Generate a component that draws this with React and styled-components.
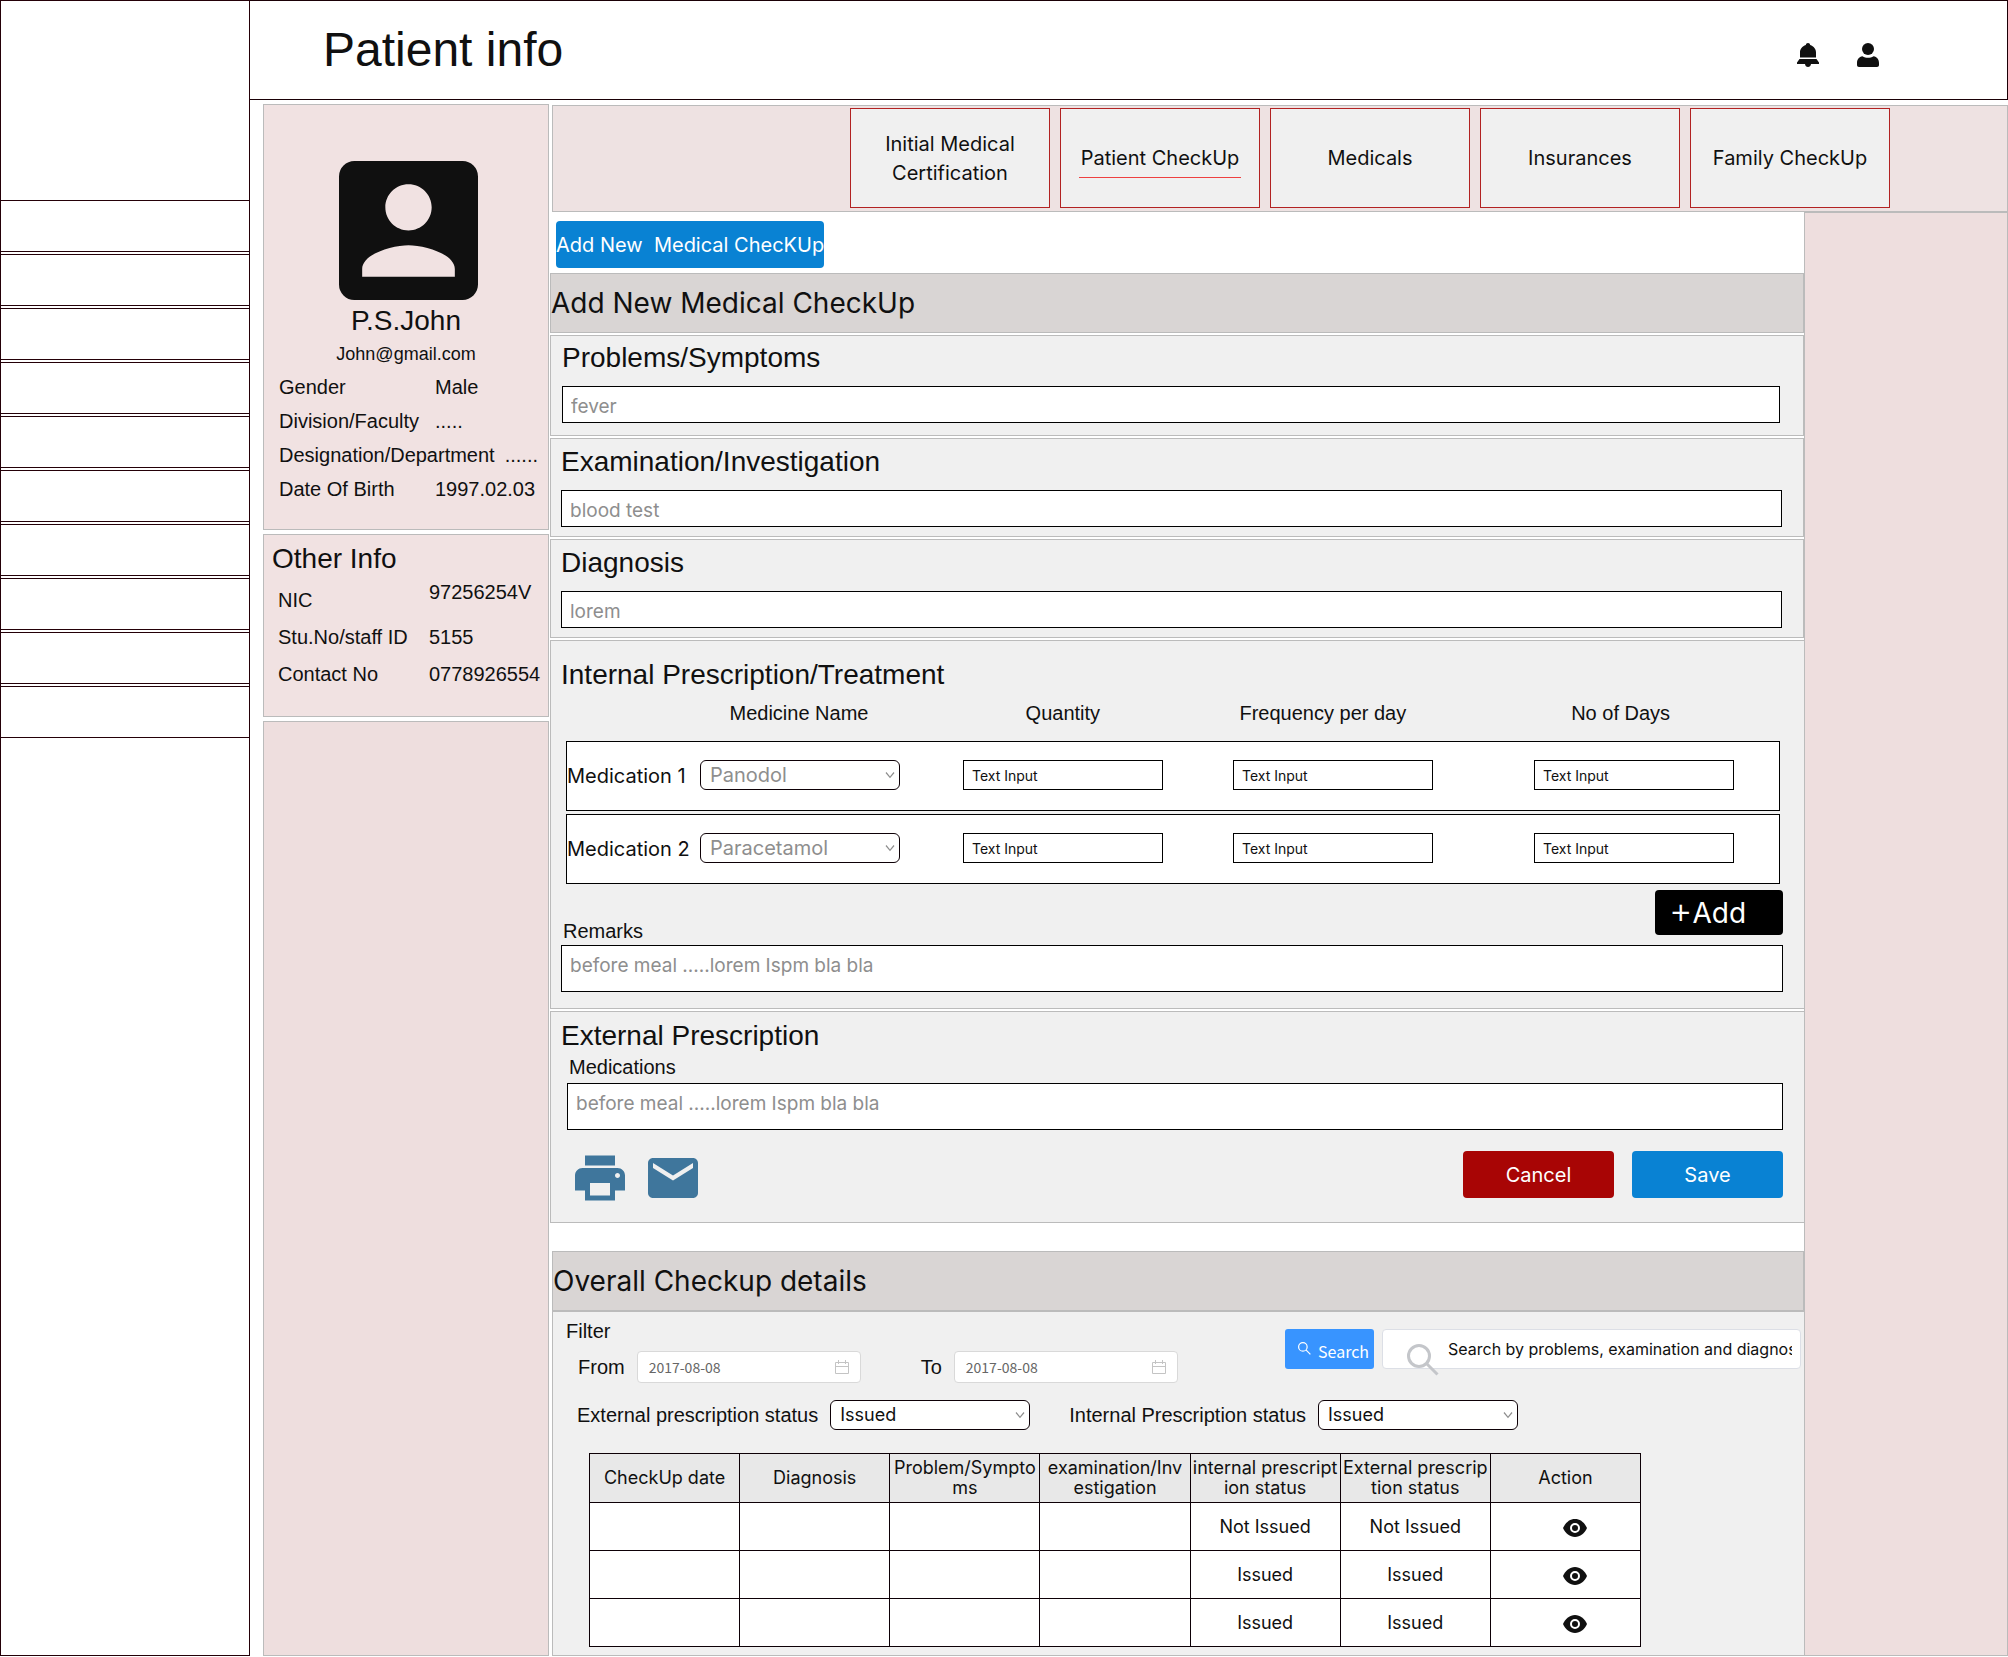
import React from "react";
import styled, { createGlobalStyle } from "styled-components";
import { MdPrint, MdEmail } from "react-icons/md";

const ui = `Inter, "Liberation Sans", sans-serif`;
const arial = `"Liberation Sans", Arial, sans-serif`;
const cjk = `"Noto Sans CJK SC", "Noto Sans", sans-serif`;

const Global = createGlobalStyle`
  *, *::before, *::after { box-sizing: border-box; }
  body { margin: 0; background: #fff; color: #101010; font: 20px/24px ${arial}; }
  h1, h2, h3, p, dl, dd, dt { margin: 0; font-weight: 400; }
  button, input, select, textarea { font: inherit; color: inherit; margin: 0; }
  button { cursor: pointer; border: 0; padding: 0; }
`;

const Page = styled.div`
  display: flex;
  min-height: 100vh;
  padding-bottom: 1px;
`;

const Sidebar = styled.nav`
  flex: 0 0 250px;
  border: 1px solid #240008;
  padding-top: 199px;
  display: flex;
  flex-direction: column;
  gap: 2px;
`;

const NavSlot = styled.a`
  height: 52px;
  border: solid #240008;
  border-width: 1px 0;
`;

const Body = styled.div`
  flex: 1;
  min-width: 0;
  display: flex;
  flex-direction: column;
`;

const Header = styled.header`
  height: 100px;
  border: 1px solid #1a0006;
  border-left: 0;
  display: flex;
  align-items: center;
  justify-content: space-between;
  padding: 0 128px 0 73px;
`;

const Title = styled.h1`
  font-size: 48px;
  line-height: 56px;
`;

const HeaderIcons = styled.div`
  display: flex;
  align-items: center;
  gap: 38px;
  padding-top: 9px;
`;

const IconButton = styled.button`
  display: flex;
  background: none;
  color: ${(p) => p.$color || "#101010"};
`;

const Columns = styled.div`
  flex: 1;
  display: flex;
  gap: 3px;
  padding: 4px 0 0 13px;
`;

const Profile = styled.aside`
  flex: 0 0 286px;
  display: flex;
  flex-direction: column;
  gap: 4px;
`;

const Card = styled.section`
  background: #f1e2e2;
  border: 1px solid #bbb;
`;

const UserCard = styled(Card)`
  height: 426px;
  padding-top: 56px;
`;

const OtherCard = styled(Card)`
  height: 183px;
  padding-top: 8px;
`;

const Filler = styled.div`
  flex: 1;
  background: #eedede;
  border: 1px solid #bbb;
`;

const Avatar = styled.svg`
  display: block;
  width: 139px;
  height: 139px;
  margin-left: 75px;
`;

const UserName = styled.h2`
  font-size: 28px;
  line-height: 42px;
  text-align: center;
`;

const Email = styled.p`
  font-size: 18px;
  line-height: 24px;
  text-align: center;
`;

const Facts = styled.dl`
  display: flex;
  flex-direction: column;
  gap: 10px;
  padding: ${(p) => p.$pad};
`;

const Fact = styled.div`
  display: grid;
  grid-template-columns: minmax(${(p) => p.$label}px, max-content) auto;
  column-gap: 10px;
  justify-content: start;
  line-height: ${(p) => p.$line}px;
  white-space: nowrap;
`;

const SteppedFact = styled(Fact)`
  height: 35px;
  dt { align-self: end; }
  dd { align-self: start; }
`;

const CardTitle = styled.h2`
  font-size: 28px;
  line-height: 32px;
  padding-left: 8px;
`;

const Main = styled.main`
  flex: 1;
  min-width: 0;
  display: flex;
  flex-direction: column;
  padding-top: 1px;
`;

const TabBar = styled.nav`
  height: 107px;
  background: #eee2e2;
  border: 1px solid #bbb;
  display: flex;
  justify-content: flex-end;
  gap: 10px;
  padding: 2px 117px 0 0;
`;

const Tab = styled.a`
  width: 200px;
  height: 100px;
  border: 1px solid #b22222;
  background: #f0f0f0;
  color: inherit;
  text-decoration: none;
  font: 20px/29px ${ui};
  display: flex;
  align-items: center;
  justify-content: center;
  text-align: center;
  padding: 0 16px;
`;

const TabText = styled.span`
  padding: 6px 2px 4px;
  border-bottom: 1px solid ${(p) => (p.$active ? "#ee4040" : "transparent")};
`;

const Content = styled.div`
  flex: 1;
  display: flex;
`;

const Work = styled.div`
  flex: 1;
  min-width: 0;
  display: flex;
  flex-direction: column;
`;

const Aside = styled.div`
  flex: 0 0 204px;
  background: #eedede;
  border: 1px solid #bbb;
`;

const Button = styled.button`
  height: 47px;
  width: ${(p) => p.$width}px;
  border-radius: 4px;
  background: ${(p) => p.$bg || "#0982d3"};
  color: #fff;
  font: 20px/24px ${ui};
  white-space: pre;
`;

const Toolbar = styled.div`
  padding: 9px 4px 5px;
`;

const Banner = styled.h2`
  height: 60px;
  background: #d9d5d4;
  border: 1px solid #bbb;
  font: 28px/58px ${ui};
`;

const Stack = styled.form`
  display: flex;
  flex-direction: column;
  gap: 2px;
  margin-left: -2px;
`;

const Panel = styled.section`
  background: #f0f0f0;
  border: 1px solid #bbb;
  border-right-width: ${(p) => (p.$flush ? 0 : 1)}px;
  padding: ${(p) => p.$pad};
`;

const PanelTitle = styled.h3`
  font-size: 28px;
  line-height: 32px;
`;

const TitleLabel = styled.label`
  display: block;
  font-size: 28px;
  line-height: 32px;
`;

const LongInput = styled.input`
  display: block;
  width: 100%;
  height: 37px;
  margin-top: 12px;
  padding: 3px 8px 0;
  border: 1px solid #000;
  background: #fff;
  font: 19px/24px ${ui};
  &::placeholder { color: #8e8e8e; opacity: 1; }
`;

const LongArea = styled.textarea`
  display: block;
  width: 100%;
  height: 47px;
  padding: 8px;
  border: 1px solid #000;
  border-radius: 0;
  background: #fff;
  resize: none;
  overflow: hidden;
  font: 19px/24px ${ui};
  &::placeholder { color: #8e8e8e; opacity: 1; }
`;

const FieldLabel = styled.label`
  display: block;
  line-height: 24px;
  padding-left: 2px;
`;

const medColumns = (a, b, c, d) =>
  `133px 200px minmax(20px, ${a}fr) 200px minmax(20px, ${b}fr) 200px minmax(20px, ${c}fr) 200px minmax(20px, ${d}fr)`;

const MedHead = styled.div`
  display: grid;
  grid-template-columns: ${medColumns(66, 62, 101, 50)};
  padding: 10px 14px 0 5px;
  text-align: center;
`;

const HeadCell = styled.span`
  grid-column: ${(p) => p.$col};
`;

const MedRows = styled.div`
  display: flex;
  flex-direction: column;
  gap: 3px;
  margin: 16px 3px 0 5px;
`;

const MedRow = styled.div`
  display: grid;
  grid-template-columns: ${medColumns(63, 70, 101, 45)};
  align-items: center;
  height: 70px;
  padding-bottom: 2px;
  border: 1px solid #000;
  background: #fff;
`;

const MedLabel = styled.label`
  font: 20px/24px ${ui};
  white-space: nowrap;
  padding-top: 2px;
`;

const SelectBox = styled.div`
  display: grid;
  grid-column: ${(p) => p.$col || "auto"};
  width: 200px;
  align-items: center;
  & > * { grid-area: 1 / 1; }
  & > svg { justify-self: end; margin-right: 5px; pointer-events: none; }
`;

const Select = styled.select`
  appearance: none;
  width: 100%;
  height: 30px;
  border: 1px solid #0d0006;
  border-radius: 6px;
  background: #fff;
  padding: 0 20px 0 9px;
  font: ${(p) => p.$size}px/24px ${ui};
  color: ${(p) => p.$color};
`;

const SmallInput = styled.input`
  grid-column: ${(p) => p.$col};
  width: 200px;
  height: 30px;
  border: 1px solid #000;
  background: #fff;
  padding: 1px 8px 0;
  font: 14px/20px ${ui};
  &::placeholder { color: #101010; opacity: 1; }
`;

const RemarksHead = styled.div`
  display: flex;
  align-items: flex-end;
  justify-content: space-between;
  margin: 6px 0 10px;
`;

const AddButton = styled(Button)`
  height: 45px;
  font-size: 28px;
  text-align: left;
  padding-left: 14px;
`;

const Plus = styled.span`
  font-size: 36px;
  font-weight: 300;
  line-height: 0;
`;

const RemarksLabel = styled(FieldLabel)`
  margin-bottom: -8px;
`;

const ExternalField = styled.div`
  display: flex;
  flex-direction: column;
  gap: 4px;
  padding: 3px 0 0 6px;
`;

const Actions = styled.div`
  display: flex;
  justify-content: space-between;
  align-items: flex-start;
  padding: 18px 0 0 9px;
`;

const IconGroup = styled.div`
  display: flex;
  gap: 13px;
`;

const ButtonGroup = styled.div`
  display: flex;
  gap: 18px;
  padding-top: 3px;
`;

const Overall = styled.section`
  flex: 1;
  display: flex;
  flex-direction: column;
  margin-top: 28px;
`;

const FilterPanel = styled.div`
  flex: 1;
  background: #f0f0f0;
  border: solid #bbb;
  border-width: 1px 0 1px 1px;
  padding: 7px 3px 8px 13px;
`;

const FilterTop = styled.div`
  display: flex;
  justify-content: space-between;
`;

const DateRow = styled.div`
  display: flex;
  align-items: center;
  gap: 12px;
  padding: 8px 0 0 12px;
`;

const DateGroup = styled.div`
  display: flex;
  align-items: center;
  gap: 12px;
  margin-right: 48px;
`;

const DateBox = styled.div`
  display: flex;
  align-items: center;
  width: 224px;
  height: 32px;
  border: 1px solid #d9d9d9;
  border-radius: 4px;
  background: #fff;
  padding: 0 11px;
`;

const DateInput = styled.input`
  flex: 1;
  min-width: 0;
  border: 0;
  padding: 0;
  background: none;
  color: #666;
  font: 14px/20px ${cjk};
`;

const SearchRow = styled.div`
  display: flex;
  gap: 8px;
  padding-top: 10px;
`;

const SearchButton = styled.button`
  width: 89px;
  height: 40px;
  border-radius: 3px;
  background: #3894ff;
  color: #fff;
  font: 16px/24px ${cjk};
  display: flex;
  align-items: center;
  gap: 7px;
  padding: 4px 0 0 13px;
  & > svg { margin-bottom: 6px; }
`;

const SearchBox = styled.div`
  display: flex;
  align-items: center;
  gap: 9px;
  width: 419px;
  height: 40px;
  border: 1px solid #dcdfe6;
  border-radius: 4px;
  background: #fff;
  padding: 0 8px 0 24px;
  & > svg { flex: none; margin-top: 22px; }
`;

const SearchInput = styled.input`
  flex: 1;
  min-width: 0;
  border: 0;
  padding: 0;
  background: none;
  font: 16px/24px ${ui};
`;

const StatusRow = styled.div`
  display: flex;
  align-items: center;
  gap: 39px;
  padding: 17px 0 0 11px;
`;

const StatusField = styled.div`
  display: flex;
  align-items: center;
  gap: 12px;
`;

const Table = styled.table`
  table-layout: fixed;
  width: 1052px;
  margin: 23px 0 0 23px;
  border-collapse: collapse;
  font: 18px/20px ${ui};
  text-align: center;
  background: #fff;
`;

const Th = styled.th`
  height: 49px;
  border: 1px solid #0d0006;
  background: #e8e8e8;
  font-weight: 400;
  padding: 0;
  white-space: pre-line;
`;

const Td = styled.td`
  height: 48px;
  border: 1px solid #0d0006;
  padding: 0;
`;

const ViewButton = styled(IconButton)`
  margin: 0 auto;
  padding: 2px 0 0 20px;
`;

const Chevron = () => (
  <svg width="10" height="8" viewBox="0 0 10 8" fill="none" stroke="#8e8e8e" strokeWidth="1.2">
    <path d="M1 1.5 5 6.3 9 1.5" />
  </svg>
);

const Calendar = () => (
  <svg width="14" height="14" viewBox="0 0 14 14" fill="none" stroke="#c4c4c4">
    <path d="M.5 2.5h13v11H.5zM.5 6.5h13M3.5 0v4M10.5 0v4" />
  </svg>
);

const Magnifier = ({ size, color, weight }) => (
  <svg width={size} height={size} viewBox="0 0 32 32" fill="none" stroke={color} strokeWidth={weight}>
    <circle cx="12" cy="12" r="10.5" />
    <path d="M19.5 19.5 30.5 30.5" />
  </svg>
);

const Eye = () => (
  <svg width="24" height="18" viewBox="0 0 24 18">
    <path fill="#101010" d="M0 9C2.500 3.500 6.800 0 12 0s9.500 3.500 12 9c-2.500 5.500-6.800 9-12 9S2.500 14.500 0 9z" />
    <circle cx="12" cy="9" r="4" fill="none" stroke="#fff" strokeWidth="2" />
  </svg>
);

const Bell = () => (
  <svg width="22" height="24" viewBox="0 0 22 24" fill="currentColor">
    <path d="M11 0c1.3 0 2 .8 2.2 1.9C16.8 3 19 6 19 9.500V14.500H3V9.500C3 6 5.200 3 8.800 1.900 9 .8 9.700 0 11 0zM2.500 16h17L22 19.500V21h-8c-.2 1.800-1.400 3-3 3s-2.800-1.200-3-3H0v-1.500z" />
  </svg>
);

const Person = () => (
  <svg width="22" height="24" viewBox="0 0 22 24" fill="currentColor">
    <circle cx="11" cy="6" r="6" />
    <path d="M5.500 13.200c3.400 2.200 7.600 2.200 11 0C20 13.800 22 16.500 22 20v2c0 1.200-.8 2-2 2H2c-1.200 0-2-.8-2-2v-2c0-3.500 2-6.200 5.500-6.800z" />
  </svg>
);

const tabs = ["Initial Medical Certification", "Patient CheckUp", "Medicals", "Insurances", "Family CheckUp"];

const notes = [
  { id: "problems", label: "Problems/Symptoms", hint: "fever", pad: "6px 23px 12px 11px" },
  { id: "examination", label: "Examination/Investigation", hint: "blood test", pad: "7px 21px 9px 10px" },
  { id: "diagnosis", label: "Diagnosis", hint: "lorem", pad: "7px 21px 9px 10px" },
];

const meds = ["Panodol", "Paracetamol"];

const headings = [
  "CheckUp date",
  "Diagnosis",
  "Problem/Sympto\nms",
  "examination/Inv\nestigation",
  "internal prescript\nion status",
  "External prescrip\ntion status",
  "Action",
];

const rows = ["Not Issued", "Issued", "Issued"];

function StatusSelect({ id, label }) {
  return (
    <StatusField>
      <label htmlFor={id}>{label}</label>
      <SelectBox>
        <Select id={id} $size={18} $color="#101010">
          <option>Issued</option>
          <option>Not Issued</option>
        </Select>
        <Chevron />
      </SelectBox>
    </StatusField>
  );
}

function DateField({ id, label }) {
  return (
    <DateGroup>
      <label htmlFor={id}>{label}</label>
      <DateBox>
        <DateInput id={id} defaultValue="2017-08-08" />
        <Calendar />
      </DateBox>
    </DateGroup>
  );
}

export default function App() {
  return (
    <Page>
      <Global />
      <Sidebar>
        {Array.from({ length: 10 }, (_, i) => (
          <NavSlot key={i} href="#" />
        ))}
      </Sidebar>
      <Body>
        <Header>
          <Title>Patient info</Title>
          <HeaderIcons>
            <IconButton aria-label="Notifications"><Bell /></IconButton>
            <IconButton aria-label="Account"><Person /></IconButton>
          </HeaderIcons>
        </Header>
        <Columns>
          <Profile>
            <UserCard>
              <Avatar viewBox="3 3 18 18" fill="#101010">
                <path d="M3 5v14a2 2 0 0 0 2 2h14c1.100 0 2-.9 2-2V5a2 2 0 0 0-2-2H5a2 2 0 0 0-2 2zm12 4c0 1.660-1.340 3-3 3s-3-1.340-3-3 1.340-3 3-3 3 1.340 3 3zm-9 8c0-2 4-3.100 6-3.100s6 1.100 6 3.100v1H6v-1z" />
              </Avatar>
              <UserName>P.S.John</UserName>
              <Email>John@gmail.com</Email>
              <Facts $pad="9px 0 0 15px">
                <Fact $line={24} $label={146}><dt>Gender</dt><dd>Male</dd></Fact>
                <Fact $line={24} $label={146}><dt>Division/Faculty</dt><dd>.....</dd></Fact>
                <Fact $line={24} $label={146}><dt>Designation/Department</dt><dd>......</dd></Fact>
                <Fact $line={24} $label={146}><dt>Date Of Birth</dt><dd>1997.02.03</dd></Fact>
              </Facts>
            </UserCard>
            <OtherCard>
              <CardTitle>Other Info</CardTitle>
              <Facts $pad="4px 0 0 14px">
                <SteppedFact $line={27} $label={141}><dt>NIC</dt><dd>97256254V</dd></SteppedFact>
                <Fact $line={27} $label={141}><dt>Stu.No/staff ID</dt><dd>5155</dd></Fact>
                <Fact $line={27} $label={141}><dt>Contact No</dt><dd>0778926554</dd></Fact>
              </Facts>
            </OtherCard>
            <Filler />
          </Profile>
          <Main>
            <TabBar>
              {tabs.map((t, i) => (
                <Tab key={t} href="#"><TabText $active={i === 1}>{t}</TabText></Tab>
              ))}
            </TabBar>
            <Content>
              <Work>
                <Toolbar>
                  <Button $width={268}>{"Add New  Medical ChecKUp"}</Button>
                </Toolbar>
                <Stack>
                  <Banner>Add New Medical CheckUp</Banner>
                  {notes.map((n) => (
                    <Panel key={n.id} $pad={n.pad}>
                      <TitleLabel htmlFor={n.id}>{n.label}</TitleLabel>
                      <LongInput id={n.id} placeholder={n.hint} />
                    </Panel>
                  ))}
                  <Panel $flush $pad="18px 21px 16px 10px">
                    <PanelTitle>Internal Prescription/Treatment</PanelTitle>
                    <MedHead>
                      <HeadCell $col={2}>Medicine Name</HeadCell>
                      <HeadCell $col={4}>Quantity</HeadCell>
                      <HeadCell $col={6}>Frequency per day</HeadCell>
                      <HeadCell $col={8}>No of Days</HeadCell>
                    </MedHead>
                    <MedRows>
                      {meds.map((m, i) => (
                        <MedRow key={m}>
                          <MedLabel htmlFor={"med" + i}>Medication {i + 1}</MedLabel>
                          <SelectBox $col={2}>
                            <Select id={"med" + i} $size={20} $color="#8e8e8e" defaultValue={m}>
                              {meds.map((o) => <option key={o}>{o}</option>)}
                            </Select>
                            <Chevron />
                          </SelectBox>
                          <SmallInput $col={4} aria-label="Quantity" placeholder="Text Input" />
                          <SmallInput $col={6} aria-label="Frequency per day" placeholder="Text Input" />
                          <SmallInput $col={8} aria-label="No of Days" placeholder="Text Input" />
                        </MedRow>
                      ))}
                    </MedRows>
                    <RemarksHead>
                      <RemarksLabel htmlFor="remarks">Remarks</RemarksLabel>
                      <AddButton type="button" $width={128} $bg="#000"><Plus>+</Plus>Add</AddButton>
                    </RemarksHead>
                    <LongArea id="remarks" placeholder="before meal .....lorem Ispm bla bla" />
                  </Panel>
                  <Panel $flush $pad="8px 21px 14px 10px">
                    <PanelTitle>External Prescription</PanelTitle>
                    <ExternalField>
                      <FieldLabel htmlFor="external">Medications</FieldLabel>
                      <LongArea id="external" placeholder="before meal .....lorem Ispm bla bla" />
                    </ExternalField>
                    <Actions>
                      <IconGroup>
                        <IconButton type="button" $color="#3f769c" aria-label="Print"><MdPrint size={60} /></IconButton>
                        <IconButton type="button" $color="#3f769c" aria-label="Mail"><MdEmail size={60} /></IconButton>
                      </IconGroup>
                      <ButtonGroup>
                        <Button type="button" $width={151} $bg="#a80505">Cancel</Button>
                        <Button type="button" $width={151}>Save</Button>
                      </ButtonGroup>
                    </Actions>
                  </Panel>
                </Stack>
                <Overall>
                  <Banner>Overall Checkup details</Banner>
                  <FilterPanel>
                    <FilterTop>
                      <div>
                        <p>Filter</p>
                        <DateRow>
                          <DateField id="from" label="From" />
                          <DateField id="to" label="To" />
                        </DateRow>
                      </div>
                      <SearchRow>
                        <SearchButton type="button">
                          <Magnifier size={13} color="#fff" weight={3} />Search
                        </SearchButton>
                        <SearchBox>
                          <Magnifier size={32} color="#c4c6ca" weight={3} />
                          <SearchInput aria-label="Search" defaultValue="Search by problems, examination and diagnosis" />
                        </SearchBox>
                      </SearchRow>
                    </FilterTop>
                    <StatusRow>
                      <StatusSelect id="ext" label="External prescription status" />
                      <StatusSelect id="int" label="Internal Prescription status" />
                    </StatusRow>
                    <Table>
                      <thead>
                        <tr>{headings.map((h) => <Th key={h}>{h}</Th>)}</tr>
                      </thead>
                      <tbody>
                        {rows.map((s, i) => (
                          <tr key={i}>
                            <Td /><Td /><Td /><Td />
                            <Td>{s}</Td>
                            <Td>{s}</Td>
                            <Td><ViewButton aria-label="View"><Eye /></ViewButton></Td>
                          </tr>
                        ))}
                      </tbody>
                    </Table>
                  </FilterPanel>
                </Overall>
              </Work>
              <Aside />
            </Content>
          </Main>
        </Columns>
      </Body>
    </Page>
  );
}
